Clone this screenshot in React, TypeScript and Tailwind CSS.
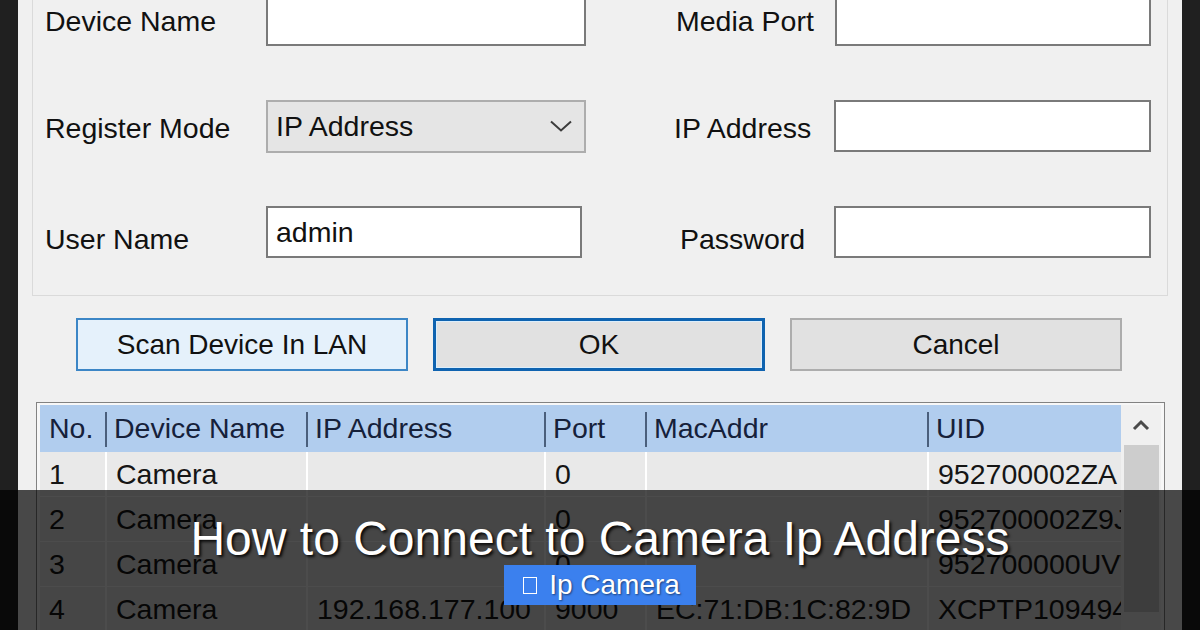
import { ReactNode } from 'react'

const font = "font-['Liberation_Sans',Arial,sans-serif]"

type Device = { no: string; name: string; ip: string; port: string; mac: string; uid: string }

const devices: Device[] = [
  { no: '1', name: 'Camera', ip: '', port: '0', mac: '', uid: '952700002ZA' },
  { no: '2', name: 'Camera', ip: '', port: '0', mac: '', uid: '952700002Z9J' },
  { no: '3', name: 'Camera', ip: '', port: '0', mac: '', uid: '952700000UVW' },
  { no: '4', name: 'Camera', ip: '192.168.177.100', port: '9000', mac: 'EC:71:DB:1C:82:9D', uid: 'XCPTP1094945' },
]

// column widths of the device list, left to right
const cols = ['w-[65px]', 'w-[201px]', 'w-[238px]', 'w-[101px]', 'w-[282px]', 'w-[194px]']

function TextBox({ value = '', className = '' }: { value?: string; className?: string }) {
  return (
    <div className={`h-[52px] bg-white border-2 border-[#7a7a7a] flex items-center px-[8px] text-[28.5px] text-[#111] ${className}`}>
      {value}
    </div>
  )
}

function FieldRow({ left, right, labelOffset = '', rightShift = '' }: { left: [string, ReactNode]; right: [string, ReactNode]; labelOffset?: string; rightShift?: string }) {
  return (
    <div className="flex items-center h-[52px]">
      <div className={`w-[221px] text-[28.5px] text-[#111] ${labelOffset}`}>{left[0]}</div>
      <div className="w-[320px]">{left[1]}</div>
      <div className={`ml-[90px] w-[159px] text-[28.5px] text-[#111] ${labelOffset}`}>
        <span className={rightShift}>{right[0]}</span>
      </div>
      <div className="w-[316px]">{right[1]}</div>
    </div>
  )
}

export default function App() {
  return (
    <div className={`relative w-[1200px] h-[630px] overflow-hidden bg-[#202020] ${font}`}>
      <div className="ml-[18px] w-[1164px] h-full bg-[#f0f0f0] flex flex-col">
        {/* group box with the device fields */}
        <div className="mx-[14px] -mt-[7px] border border-[#dadada] pl-[12px] pb-[37px] flex flex-col gap-[54px]">
          <FieldRow labelOffset="mt-[3px]" left={['Device Name', <TextBox />]} right={['Media Port', <TextBox />]} />
          <FieldRow
            labelOffset="mt-[5px]"
            rightShift="-ml-[2px]"
            left={[
              'Register Mode',
              <div className="h-[53px] bg-[#e5e5e5] border-2 border-[#adadad] flex items-center justify-between pl-[8px] pr-[12px] text-[28.5px] text-[#111]">
                <span>IP Address</span>
                <svg width="22" height="12" viewBox="0 0 22 12" fill="none" stroke="#3c3c3c" strokeWidth="2">
                  <path d="M1 1.5l10 9 10-9" />
                </svg>
              </div>,
            ]}
            right={['IP Address', <TextBox className="-ml-[1px]" />]}
          />
          <FieldRow
            labelOffset="mt-[14px]"
            rightShift="ml-[4px]"
            left={[
              'User Name',
              <TextBox value="admin" className="w-[316px]" />,
            ]}
            right={['Password', <TextBox className="-ml-[1px]" />]}
          />
        </div>

        {/* action buttons */}
        <div className="mt-[22px] pl-[58px] flex gap-[25px] text-[28px] text-[#111]">
          <button className="w-[332px] h-[53px] bg-[#e5f1fb] border-2 border-[#3c86c6] flex items-center justify-center">
            Scan Device In LAN
          </button>
          <button className="w-[332px] h-[53px] bg-[#e1e1e1] border-[3px] border-[#0f63b0] shadow-[inset_0_0_0_1px_#dbeefc] flex items-center justify-center">
            OK
          </button>
          <button className="w-[332px] h-[53px] bg-[#e1e1e1] border-2 border-[#adadad] flex items-center justify-center">
            Cancel
          </button>
        </div>

        {/* device list */}
        <div className="mt-[31px] ml-[18px] w-[1129px] flex-1 border border-[#828282] bg-[#f7f7f7] pt-[2px] px-[3px] flex">
          <div className="w-[1081px] text-[28.5px] text-[#151515]">
            <div className="h-[47px] bg-[#b1cdee] flex items-center">
              {['No.', 'Device Name', 'IP Address', 'Port', 'MacAddr', 'UID'].map((h, i) => (
                <div key={h} className={`${cols[i]} h-full flex items-center relative pl-[9px] text-[#16213a]`}>
                  {i > 0 && <span className="absolute left-0 top-[7px] bottom-[5px] w-[2px] bg-[#4a5f7c]" />}
                  {h}
                </div>
              ))}
            </div>
            {devices.map(d => (
              <div key={d.no} className="h-[45px] bg-[#e9e9e9] border-b border-white flex">
                {[d.no, d.name, d.ip, d.port, d.mac, d.uid].map((v, i) => (
                  <div key={i} className={`${cols[i]} h-full flex items-center pl-[9px] overflow-hidden whitespace-nowrap ${i > 0 ? 'border-l-2 border-white' : ''}`}>
                    {v}
                  </div>
                ))}
              </div>
            ))}
          </div>
          {/* vertical scrollbar */}
          <div className="w-[42px] bg-[#f0f0f0] flex flex-col items-center">
            <div className="h-[40px] flex items-center justify-center">
              <svg width="18" height="12" viewBox="0 0 18 12" fill="none" stroke="#4a4a4a" strokeWidth="3">
                <path d="M2 10l7-7 7 7" />
              </svg>
            </div>
            <div className="w-[35px] h-[167px] bg-[#cdcdcd]" />
          </div>
        </div>
      </div>

      {/* caption bar */}
      <div className="absolute left-0 right-0 bottom-0 h-[140px] bg-black/70 flex flex-col items-center pt-[25px]">
        <h1 className="text-[48px] leading-[48px] text-white [text-shadow:2px_2px_3px_rgba(0,0,0,0.9)]">
          How to Connect to Camera Ip Address
        </h1>
        <div className="mt-[2px] h-[40px] bg-[#3b80ee] pl-[19px] pr-[16px] flex items-center gap-[12px] text-[28px] leading-[40px] text-white [text-shadow:1px_1px_2px_rgba(0,0,0,0.5)]">
          <span className="w-[14px] h-[17px] border-[1.5px] border-white" />
          <span>Ip Camera</span>
        </div>
      </div>
    </div>
  )
}
